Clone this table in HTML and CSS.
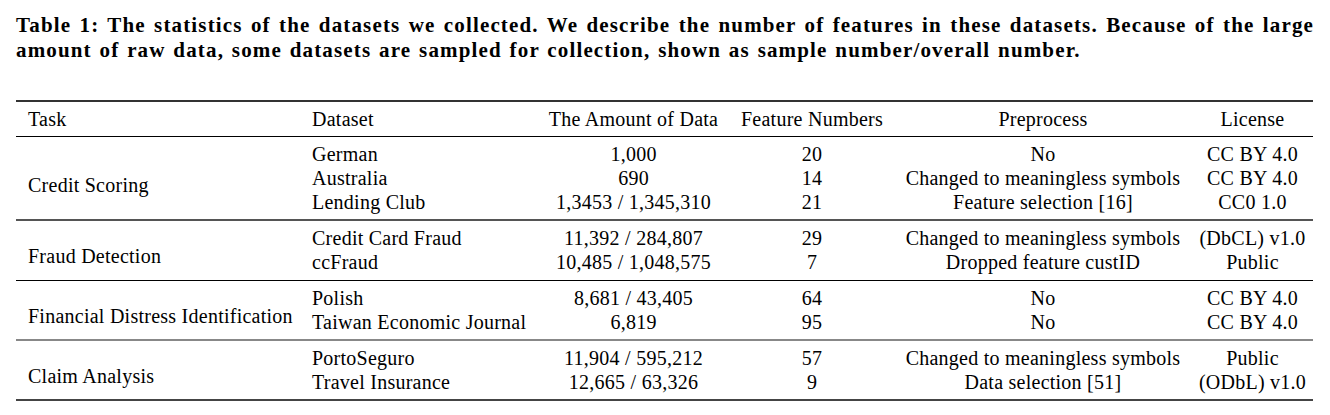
FILE: index.html
```html
<!DOCTYPE html>
<html>
<head>
<meta charset="utf-8">
<link rel="stylesheet" href="styles.css">
</head>
<body>
<div class="page">
  <p class="caption">Table 1: The statistics of the datasets we collected. We describe the number of features in these datasets. Because of the large amount of raw data, some datasets are sampled for collection, shown as sample number/overall number.</p>
  <table class="stats">
    <colgroup>
      <col class="c-task"><col class="c-data"><col class="c-amt"><col class="c-feat"><col class="c-pre"><col class="c-lic">
    </colgroup>
    <thead>
      <tr>
        <th class="l">Task</th><th class="l">Dataset</th><th>The Amount of Data</th><th>Feature Numbers</th><th>Preprocess</th><th>License</th>
      </tr>
    </thead>
    <tbody class="g rule-a">
      <tr class="first"><td class="task" rowspan="3">Credit Scoring</td><td class="l">German</td><td>1,000</td><td>20</td><td>No</td><td>CC BY 4.0</td></tr>
      <tr><td class="l">Australia</td><td>690</td><td>14</td><td>Changed to meaningless symbols</td><td>CC BY 4.0</td></tr>
      <tr class="last"><td class="l">Lending Club</td><td>1,3453 / 1,345,310</td><td>21</td><td>Feature selection [16]</td><td>CC0 1.0</td></tr>
    </tbody>
    <tbody class="g rule-b">
      <tr class="first"><td class="task" rowspan="2">Fraud Detection</td><td class="l">Credit Card Fraud</td><td>11,392 / 284,807</td><td>29</td><td>Changed to meaningless symbols</td><td>(DbCL) v1.0</td></tr>
      <tr class="last"><td class="l">ccFraud</td><td>10,485 / 1,048,575</td><td>7</td><td>Dropped feature custID</td><td>Public</td></tr>
    </tbody>
    <tbody class="g rule-c">
      <tr class="first"><td class="task" rowspan="2">Financial Distress Identification</td><td class="l">Polish</td><td>8,681 / 43,405</td><td>64</td><td>No</td><td>CC BY 4.0</td></tr>
      <tr class="last"><td class="l">Taiwan Economic Journal</td><td>6,819</td><td>95</td><td>No</td><td>CC BY 4.0</td></tr>
    </tbody>
    <tbody class="g rule-d">
      <tr class="first"><td class="task" rowspan="2">Claim Analysis</td><td class="l">PortoSeguro</td><td>11,904 / 595,212</td><td>57</td><td>Changed to meaningless symbols</td><td>Public</td></tr>
      <tr class="last"><td class="l">Travel Insurance</td><td>12,665 / 63,326</td><td>9</td><td>Data selection [51]</td><td>(ODbL) v1.0</td></tr>
    </tbody>
  </table>
</div>
</body>
</html>
```

FILE: styles.css
```css
html, body {
  margin: 0;
  padding: 0;
  background: #ffffff;
}

.page {
  padding: 13px 17px 0 16px;
  font-family: "Liberation Serif", "Times New Roman", serif;
  color: #000;
}

.caption {
  margin: 0;
  font-weight: bold;
  font-size: 21px;
  line-height: 25px;
  letter-spacing: 1.15px;
  word-spacing: 1.4px;
  text-align: justify;
  width: 1298px;
}

.stats {
  margin-top: 37px;
  width: 1297px;
  table-layout: fixed;
  border-collapse: collapse;
  font-size: 20px;
  letter-spacing: 0.25px;
  line-height: 24px;
  border-top: 2px solid #333;
  border-bottom: 2px solid #444;
}

.c-task { width: 284px; }
.c-data { width: 237px; }
.c-amt { width: 193px; }
.c-feat { width: 164px; }
.c-pre { width: 298px; }
.c-lic { width: 121px; }

th, td {
  padding: 0 6px;
  text-align: center;
  white-space: nowrap;
  font-weight: normal;
  vertical-align: middle;
}

th.l, td.l, td.task {
  text-align: left;
  padding-left: 12px;
}

thead th {
  height: 34px;
  padding-top: 0;
  padding-bottom: 0;
  border-bottom: 1px solid #000;
}

tr.first td { padding-top: 5px; }
tr.last td { padding-bottom: 5px; }
tr.first td.l { padding-top: 4px; }

tr.first td.task {
  padding-top: 11px;
  padding-bottom: 0;
}

.rule-a tr.first td.task { padding-top: 14px; }

.rule-a { border-bottom: 2px solid #555; }
.rule-a tr.first td.l { padding-top: 5px; }
.rule-b { border-bottom: 1px solid #000; }
.rule-b tr.last td { padding-bottom: 6px; }
.rule-b tr.first td.l { padding-top: 5px; }
.rule-c { border-bottom: 2px solid #888; }
```
